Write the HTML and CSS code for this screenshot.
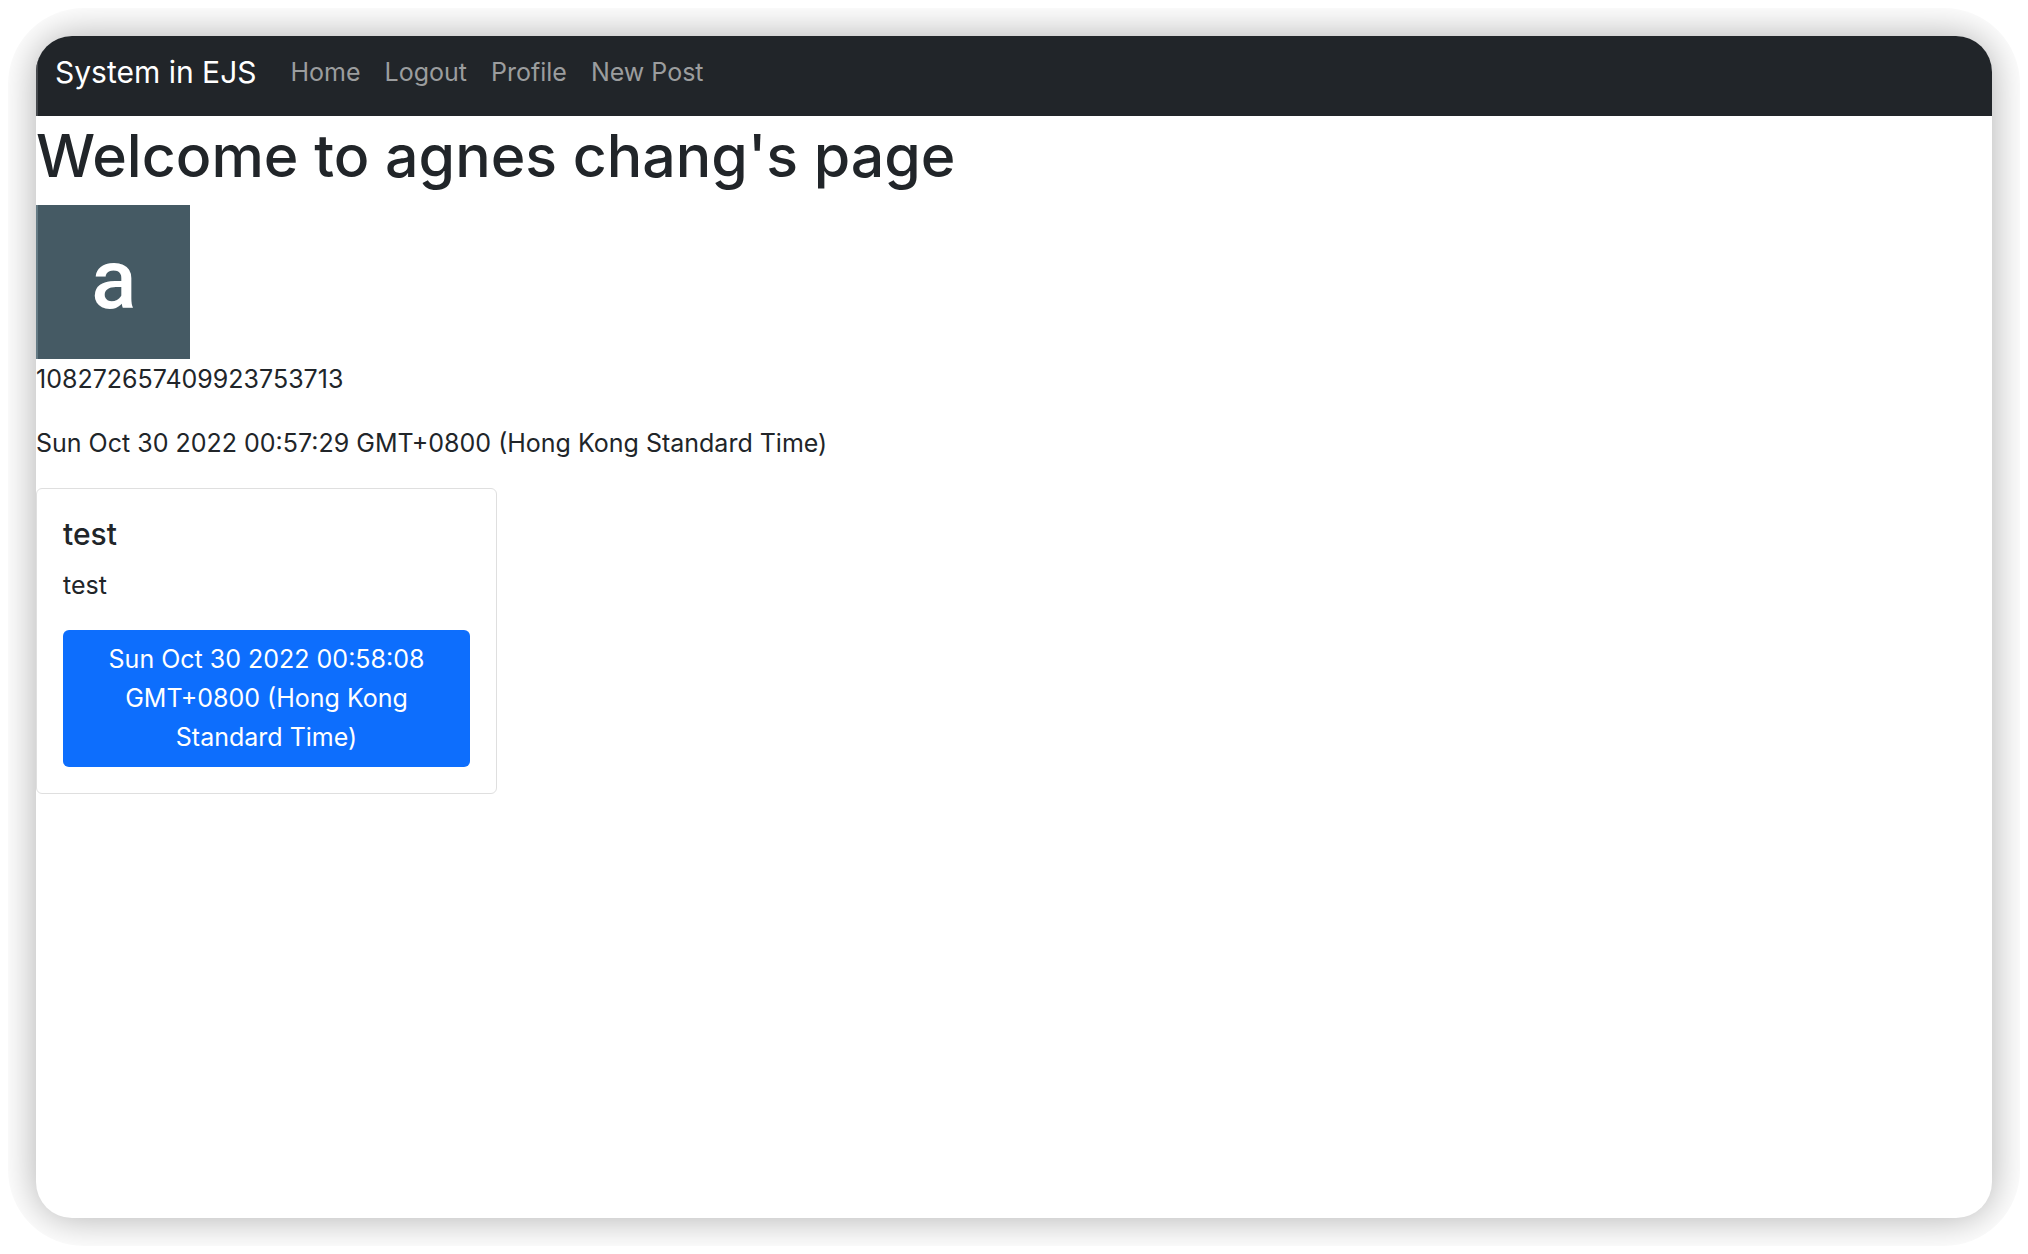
FILE: index.html
```html
<!DOCTYPE html>
<html lang="en">
<head>
<meta charset="utf-8">
<title>System in EJS</title>
<link rel="stylesheet" href="styles.css">
</head>
<body>
<div class="window">
  <nav class="navbar">
    <a class="brand" href="#">System in EJS</a>
    <a class="nav-link" href="#">Home</a>
    <a class="nav-link" href="#">Logout</a>
    <a class="nav-link" href="#">Profile</a>
    <a class="nav-link" href="#">New Post</a>
  </nav>
  <main>
    <h1 class="title">Welcome to agnes chang's page</h1>
    <div class="avatar" role="img" aria-label="Profile picture">a</div>
    <p class="text">108272657409923753713</p>
    <p class="text">Sun Oct 30 2022 00:57:29 GMT+0800 (Hong Kong Standard Time)</p>
    <article class="card">
      <h2 class="card-title">test</h2>
      <p class="text">test</p>
      <a class="card-button" href="#">Sun Oct 30 2022 00:58:08 GMT+0800 (Hong Kong Standard Time)</a>
    </article>
  </main>
</div>
</body>
</html>
```
FILE: styles.css
```css
* { box-sizing: border-box; }
body {
  margin: 0;
  padding: 36px;
  min-height: 100vh;
  display: flex;
  background: #fff;
  color: #212529;
  font: 25px/39px Inter, sans-serif;
}
.window {
  flex: 1;
  border-radius: 36px;
  overflow: hidden;
  background: #fff;
  box-shadow: 0 0 40px rgba(0, 0, 0, .33);
  clip-path: inset(-28px round 76px);
}
.navbar {
  display: flex;
  align-items: center;
  gap: 24px;
  padding: 10px 19px 18px 17px;
  min-height: 80px;
  border-left: 2px solid #46494d;
  background: #212529;
}
.brand {
  margin-right: 10px;
  color: #fff;
  font-size: 30px;
  text-decoration: none;
}
.nav-link { color: #9b9d9e; text-decoration: none; }
.title {
  margin: 0 0 9px;
  font-size: 59px;
  line-height: 80px;
  font-weight: 500;
}
.avatar {
  display: flex;
  align-items: center;
  justify-content: center;
  width: 154px;
  height: 154px;
  margin-bottom: 1px;
  border-left: 2px solid #647a84;
  background: #455a64;
  color: #fff;
  font: 500 84px/84px Roboto, sans-serif;
  padding-bottom: 4px;
}
.text { margin: 0 0 25px; }
.card {
  width: 461px;
  padding: 26px;
  border: 1px solid #dfdfdf;
  border-radius: 6px;
}
.card-title {
  margin: 0 0 12px;
  font-size: 30px;
  line-height: 39px;
  font-weight: 500;
}
.card-button {
  display: block;
  padding: 10px 20px;
  border-radius: 6px;
  background: #0d6efd;
  color: #fff;
  text-align: center;
  text-decoration: none;
}
```
